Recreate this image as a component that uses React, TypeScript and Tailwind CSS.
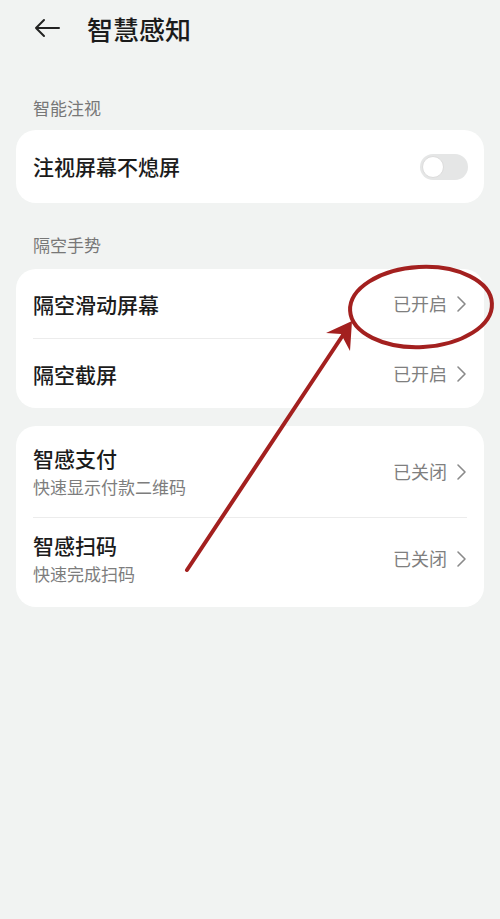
import React from "react";

const font = { fontFamily: '"Noto Sans CJK SC", "Noto Sans", sans-serif' };

function Chevron() {
  return (
    <svg width="11" height="18" viewBox="0 0 11 18" fill="none" className="ml-[9px]">
      <path d="M2 2l7 7-7 7" stroke="#8a8a8a" strokeWidth="1.6" strokeLinecap="round" strokeLinejoin="round" />
    </svg>
  );
}

function Row({ title, sub, value, h }: { title: string; sub?: string; value: string; h: string }) {
  return (
    <div className={`flex items-center justify-between ${h}`}>
      <div className="flex flex-col">
        <span className="text-[21px] leading-[28px] font-medium text-[#1b1b1b]">{title}</span>
        {sub && <span className="text-[17px] leading-[26px] text-[#7d7d7d] mt-[2px]">{sub}</span>}
      </div>
      <div className="flex items-center">
        <span className="text-[18px] text-[#7f7f7f]">{value}</span>
        <Chevron />
      </div>
    </div>
  );
}

export default function App() {
  return (
    <div className="relative w-[500px] h-[919px] bg-[#f1f3f2] overflow-hidden" style={font}>
      {/* header */}
      <div className="flex items-center h-[56px] pl-[34px]">
        <svg width="26" height="20" viewBox="0 0 26 20" fill="none">
          <path d="M25 10H2M10 2L2 10l8 8" stroke="#222" strokeWidth="2" strokeLinecap="round" strokeLinejoin="round" />
        </svg>
        <span className="ml-[27px] text-[26px] font-medium text-[#1b1b1b]">智慧感知</span>
      </div>

      <div className="px-4">
        <div className="pt-[41px] pb-[11px] pl-[17px] text-[17px] leading-[22px] text-[#777]">智能注视</div>
        <div className="bg-white rounded-[20px] h-[73px] flex items-center justify-between pl-[17px] pr-[16px]">
          <span className="text-[21px] font-medium text-[#1b1b1b]">注视屏幕不熄屏</span>
          <div className="w-[48px] h-[26px] rounded-full bg-[#e5e6e6] flex items-center pl-[2px]">
            <div className="w-[22px] h-[22px] rounded-full bg-white border border-[#dcdcdc]" />
          </div>
        </div>

        <div className="pt-[31px] pb-[13px] pl-[17px] text-[17px] leading-[22px] text-[#777]">隔空手势</div>
        <div className="bg-white rounded-[20px] px-[17px]">
          <Row title="隔空滑动屏幕" value="已开启" h="h-[69px]" />
          <div className="h-px bg-[#ececec]" />
          <Row title="隔空截屏" value="已开启" h="h-[69px]" />
        </div>

        <div className="mt-[18px] bg-white rounded-[20px] px-[17px]">
          <Row title="智感支付" sub="快速显示付款二维码" value="已关闭" h="h-[91px]" />
          <div className="h-px bg-[#ececec]" />
          <Row title="智感扫码" sub="快速完成扫码" value="已关闭" h="h-[89px] pb-[8px]" />
        </div>
      </div>

      {/* annotation */}
      <svg className="absolute inset-0 pointer-events-none" width="500" height="919" viewBox="0 0 500 919" fill="none">
        <ellipse cx="421" cy="307" rx="71" ry="40" stroke="#a3201f" strokeWidth="4" transform="rotate(-3 421 307)" />
        <path d="M187 570L349 326" stroke="#a3201f" strokeWidth="4" strokeLinecap="round" />
        <path d="M352 321L326 333L341 334L350 351Z" fill="#a3201f" />
      </svg>
    </div>
  );
}
